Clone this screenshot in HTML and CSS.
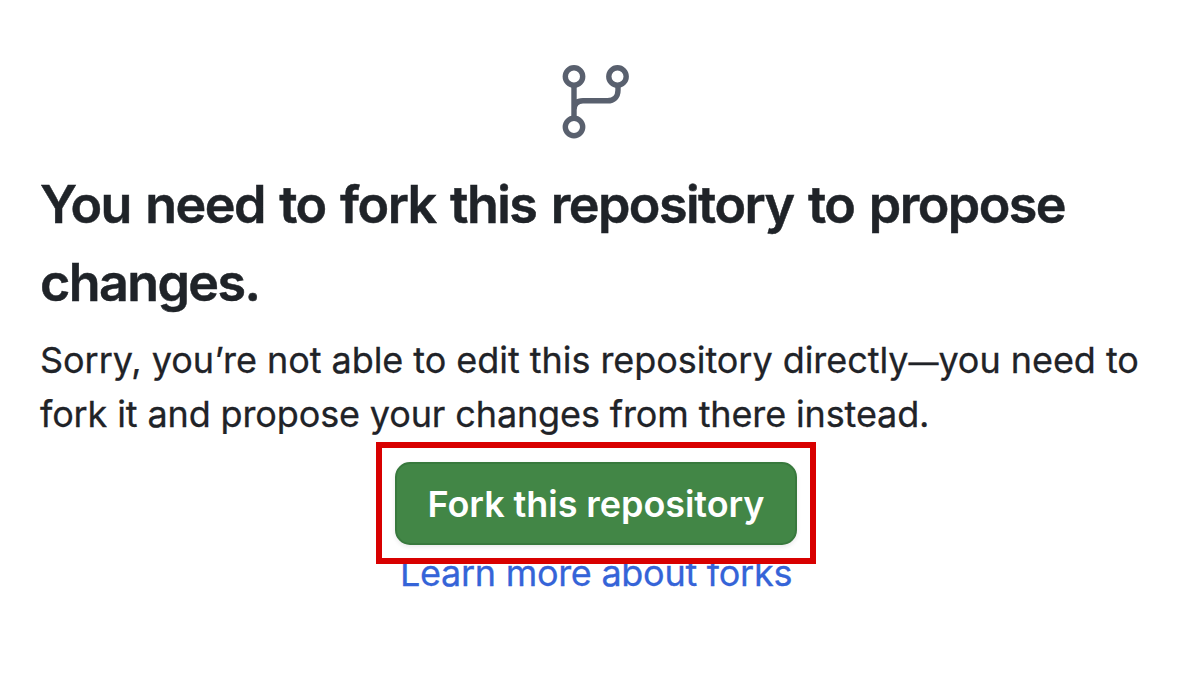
FILE: index.html
```
<!DOCTYPE html>
<html lang="en">
<head>
<meta charset="utf-8">
<title>Fork this repository</title>
<link rel="stylesheet" href="styles.css">
</head>
<body>
<main class="blankslate">
  <svg class="fork-icon" viewBox="0 0 68 76" aria-hidden="true">
    <circle cx="12" cy="12.5" r="8.7"/>
    <circle cx="55.5" cy="12.5" r="8.7"/>
    <circle cx="12" cy="63" r="8.7"/>
    <path d="M12 21v33M12 46c0-6 3-9.2 9-9.2h24.500c6.500 0 10.500-4 10.500-10.500v-5"/>
  </svg>
  <h1 class="title"><span class="title-first">You need to fork this repository to propose</span> <span class="title-last">changes.</span></h1>
  <p class="message"><span class="message-line">Sorry, you’re not able to edit this repository directly<span class="dash">—</span>you need to</span> <span class="message-line message-last">fork it and propose your changes from there instead.</span></p>
  <div class="highlight"><button class="fork-button"><span class="label">Fork this repository</span></button></div>
  <a class="learn-link">Learn more about forks</a>
</main>
</body>
</html>
```
FILE: styles.css
```
* { box-sizing: border-box; }
body { margin: 0; background: #fff; color: #1f2328; font-family: Inter, sans-serif; }
.blankslate { height: 676px; padding: 64px 42px 0 40px; display: flex; flex-direction: column; align-items: center; overflow: hidden; }
.fork-icon { width: 68px; height: 76px; flex: none; fill: none; stroke: #59606e; stroke-width: 5.4; }
.title { align-self: stretch; margin: 26px 0 0; font-size: 52px; line-height: 78px; font-weight: 600; letter-spacing: -1.53px; word-spacing: 2.8px; white-space: nowrap; -webkit-text-stroke: 0.5px currentColor; }
.title span, .message-line { display: block; width: max-content; }
.title-last { letter-spacing: -1.6px; }
.message { align-self: stretch; margin: 11px 0 0; font-size: 36px; line-height: 54px; letter-spacing: -0.05px; white-space: nowrap; -webkit-text-stroke: 0.3px currentColor; }
.message-last { letter-spacing: -0.13px; }
.dash { font-size: 30px; line-height: 1; }
.highlight { position: relative; z-index: 1; width: 440px; height: 122px; margin-top: 1px; border: 6px solid #d80000; padding: 14px 13px; flex: none; }
.fork-button { width: 402px; height: 83px; border: 2px solid #38793d; border-radius: 15px; background: #428646; color: #fff; font: 560 36px/54px Inter, sans-serif; letter-spacing: -0.06px; box-shadow: 0 2px 4px #1f232818; padding: 0; white-space: nowrap; }
.learn-link { margin-top: -18px; font-size: 36px; line-height: 54px; letter-spacing: -0.28px; color: #3564d8; white-space: nowrap; -webkit-text-stroke: 0.3px currentColor; }
```
